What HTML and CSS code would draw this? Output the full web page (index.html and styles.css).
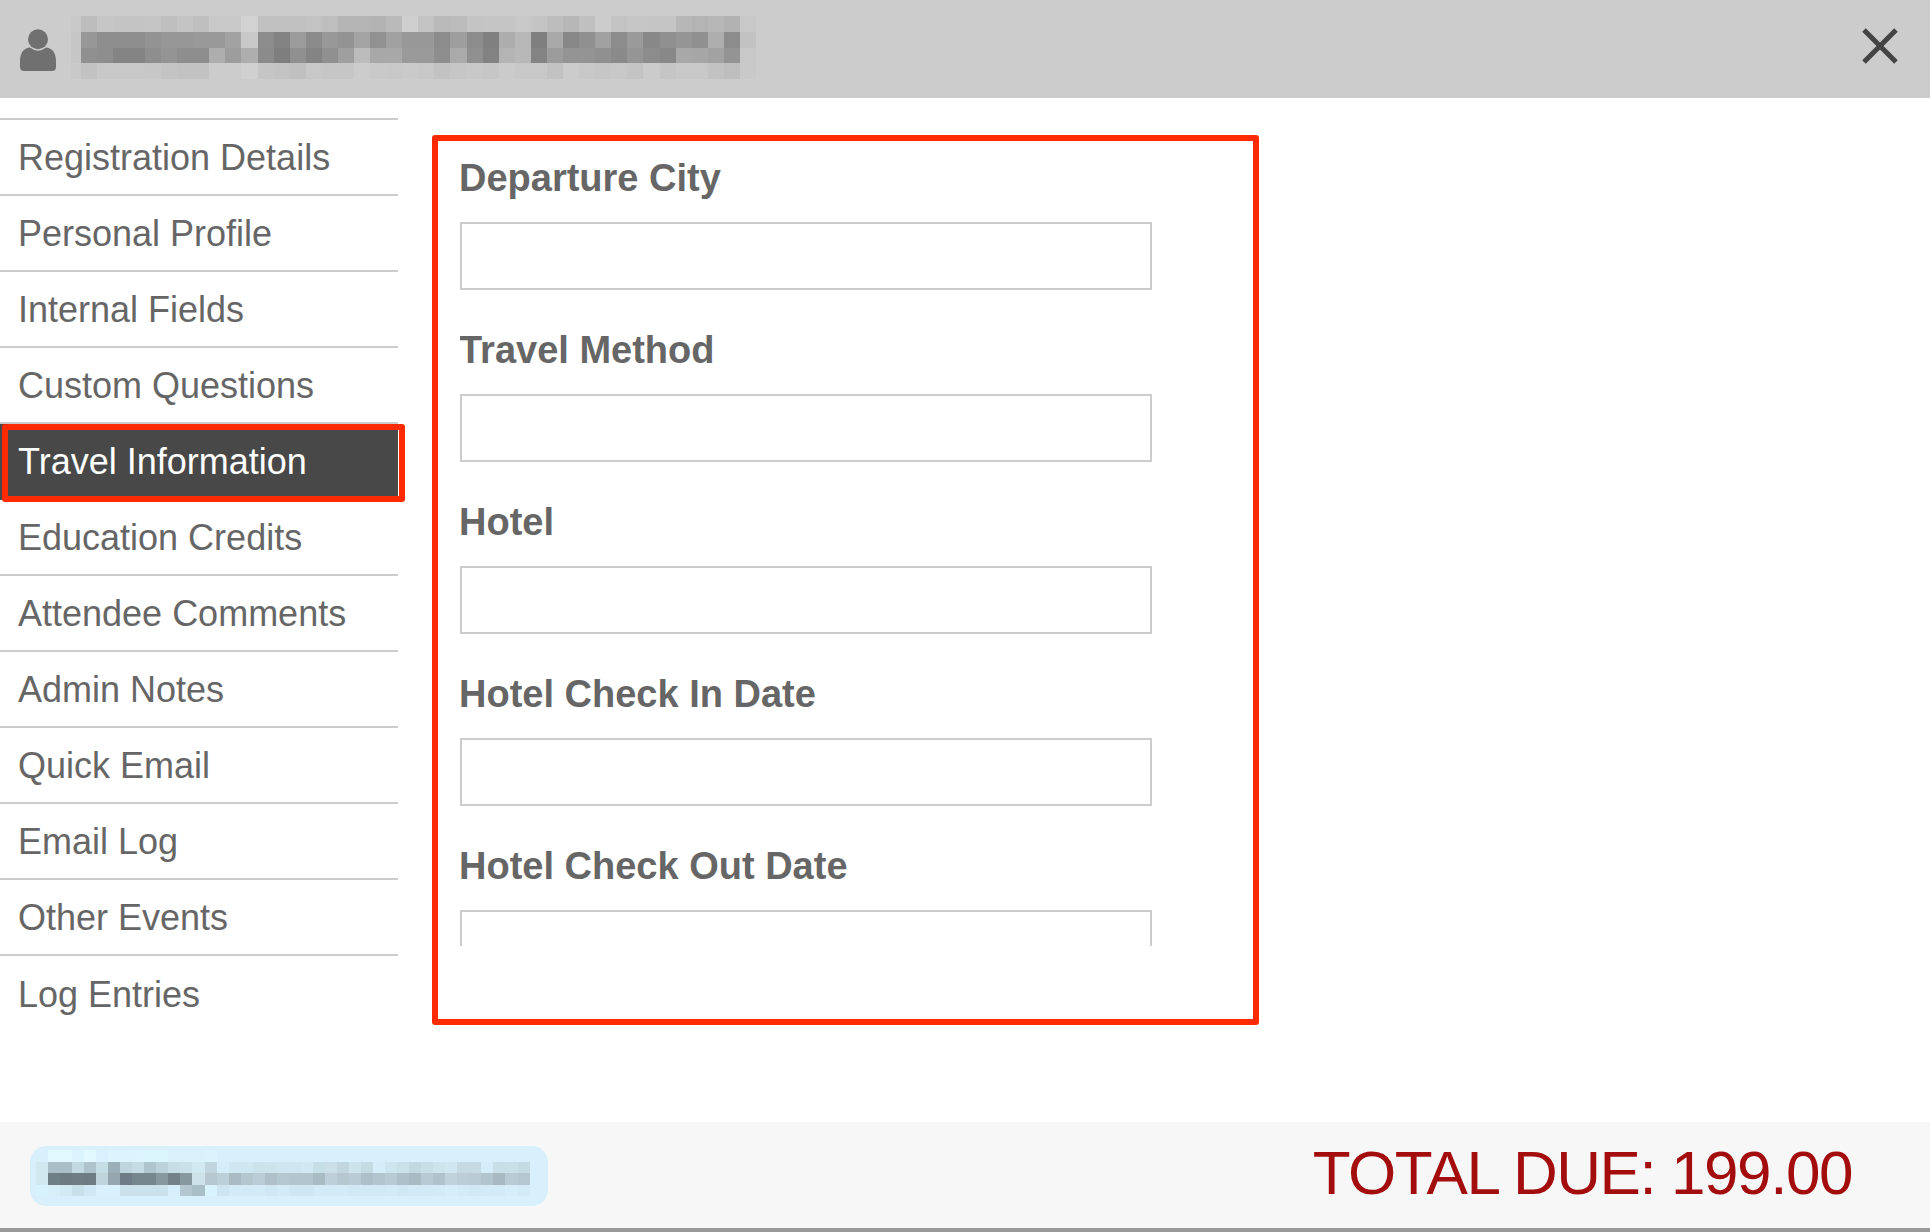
FILE: index.html
```html
<!DOCTYPE html>
<html lang="en">
<head>
<meta charset="utf-8">
<title>Travel Information</title>
<link rel="stylesheet" href="styles.css">
</head>
<body>
<div class="modal">
  <header class="top-bar">
    <svg class="avatar" width="38" height="50" viewBox="0 0 38 50" aria-hidden="true">
      <circle cx="19" cy="15.3" r="10" fill="#707070"/>
      <path d="M1 37C1 29 5 24 11 23.6A12 12 0 0 0 27 23.6C33 24 37 29 37 37V43c0 3-2 4-4 4H5c-2 0-4-1-4-4z" fill="#707070"/>
    </svg>
    <svg class="mosaic name-mosaic" viewBox="-0.6 0 42.6 4" preserveAspectRatio="none" aria-hidden="true">
      <g>
        <rect x="-0.6" fill="#c8c8c8"/><rect x="0" fill="#bdbdbd"/><rect x="1" fill="#c6c6c6"/><rect x="2" fill="#c4c4c4"/><rect x="3" fill="#c4c4c4"/><rect x="4" fill="#c5c5c5"/><rect x="5" fill="#bfbfbf"/><rect x="6" fill="#c4c4c4"/><rect x="7" fill="#bfbfbf"/><rect x="8" fill="#c8c8c8"/><rect x="9" fill="#c8c8c8"/><rect x="10" fill="#d2d2d2"/><rect x="11" fill="#c1c1c1"/><rect x="12" fill="#c1c1c1"/><rect x="13" fill="#c1c1c1"/><rect x="14" fill="#c3c3c3"/><rect x="15" fill="#bebebe"/><rect x="16" fill="#b4b4b4"/><rect x="17" fill="#b4b4b4"/><rect x="18" fill="#b3b3b3"/><rect x="19" fill="#bababa"/><rect x="20" fill="#cfcfcf"/><rect x="21" fill="#c3c3c3"/><rect x="22" fill="#bababa"/><rect x="23" fill="#bcbcbc"/><rect x="24" fill="#c4c4c4"/><rect x="25" fill="#c5c5c5"/><rect x="26" fill="#c5c5c5"/><rect x="27" fill="#c8c8c8"/><rect x="28" fill="#c4c4c4"/><rect x="29" fill="#bdbdbd"/><rect x="30" fill="#b7b7b7"/><rect x="31" fill="#c0c0c0"/><rect x="32" fill="#cccccc"/><rect x="33" fill="#c3c3c3"/><rect x="34" fill="#c6c6c6"/><rect x="35" fill="#c5c5c5"/><rect x="36" fill="#c5c5c5"/><rect x="37" fill="#b7b7b7"/><rect x="38" fill="#b4b4b4"/><rect x="39" fill="#b7b7b7"/><rect x="40" fill="#b2b2b2"/><rect x="41" fill="#c8c8c8"/>
      </g>
      <g transform="translate(0 1)">
        <rect x="-0.6" fill="#c6c6c6"/><rect x="0" fill="#979797"/><rect x="1" fill="#8e8e8e"/><rect x="2" fill="#8e8e8e"/><rect x="3" fill="#8e8e8e"/><rect x="4" fill="#939393"/><rect x="5" fill="#979797"/><rect x="6" fill="#979797"/><rect x="7" fill="#999999"/><rect x="8" fill="#999999"/><rect x="9" fill="#a2a2a2"/><rect x="10" fill="#c8c8c8"/><rect x="11" fill="#8c8c8c"/><rect x="12" fill="#828282"/><rect x="13" fill="#9b9b9b"/><rect x="14" fill="#8b8b8b"/><rect x="15" fill="#989898"/><rect x="16" fill="#939393"/><rect x="17" fill="#a4a4a4"/><rect x="18" fill="#919191"/><rect x="19" fill="#a0a0a0"/><rect x="20" fill="#989898"/><rect x="21" fill="#989898"/><rect x="22" fill="#8c8c8c"/><rect x="23" fill="#9e9e9e"/><rect x="24" fill="#8c8c8c"/><rect x="25" fill="#808080"/><rect x="26" fill="#adadad"/><rect x="27" fill="#b8b8b8"/><rect x="28" fill="#7f7f7f"/><rect x="29" fill="#a9a9a9"/><rect x="30" fill="#888888"/><rect x="31" fill="#909090"/><rect x="32" fill="#a0a0a0"/><rect x="33" fill="#8c8c8c"/><rect x="34" fill="#9a9a9a"/><rect x="35" fill="#888888"/><rect x="36" fill="#909090"/><rect x="37" fill="#959595"/><rect x="38" fill="#909090"/><rect x="39" fill="#aeaeae"/><rect x="40" fill="#8c8c8c"/><rect x="41" fill="#c2c2c2"/>
      </g>
      <g transform="translate(0 2)">
        <rect x="-0.6" fill="#c6c6c6"/><rect x="0" fill="#909090"/><rect x="1" fill="#8e8e8e"/><rect x="2" fill="#848484"/><rect x="3" fill="#848484"/><rect x="4" fill="#8e8e8e"/><rect x="5" fill="#949494"/><rect x="6" fill="#8e8e8e"/><rect x="7" fill="#8e8e8e"/><rect x="8" fill="#aeaeae"/><rect x="9" fill="#9d9d9d"/><rect x="10" fill="#aeaeae"/><rect x="11" fill="#8b8b8b"/><rect x="12" fill="#7e7e7e"/><rect x="13" fill="#909090"/><rect x="14" fill="#848484"/><rect x="15" fill="#909090"/><rect x="16" fill="#9f9f9f"/><rect x="17" fill="#bcbcbc"/><rect x="18" fill="#a8a8a8"/><rect x="19" fill="#a8a8a8"/><rect x="20" fill="#9a9a9a"/><rect x="21" fill="#9a9a9a"/><rect x="22" fill="#8e8e8e"/><rect x="23" fill="#aaaaaa"/><rect x="24" fill="#909090"/><rect x="25" fill="#828282"/><rect x="26" fill="#b4b4b4"/><rect x="27" fill="#b8b8b8"/><rect x="28" fill="#848484"/><rect x="29" fill="#9c9c9c"/><rect x="30" fill="#949494"/><rect x="31" fill="#949494"/><rect x="32" fill="#909090"/><rect x="33" fill="#8a8a8a"/><rect x="34" fill="#959595"/><rect x="35" fill="#8c8c8c"/><rect x="36" fill="#888888"/><rect x="37" fill="#a8a8a8"/><rect x="38" fill="#a6a6a6"/><rect x="39" fill="#a2a2a2"/><rect x="40" fill="#949494"/><rect x="41" fill="#c8c8c8"/>
      </g>
      <g transform="translate(0 3)">
        <rect x="-0.6" fill="#c9c9c9"/><rect x="0" fill="#c2c2c2"/><rect x="1" fill="#c8c8c8"/><rect x="2" fill="#c8c8c8"/><rect x="3" fill="#c8c8c8"/><rect x="4" fill="#c7c7c7"/><rect x="5" fill="#c4c4c4"/><rect x="6" fill="#c2c2c2"/><rect x="7" fill="#c2c2c2"/><rect x="8" fill="#cccccc"/><rect x="9" fill="#cccccc"/><rect x="10" fill="#d0d0d0"/><rect x="11" fill="#c5c5c5"/><rect x="12" fill="#c3c3c3"/><rect x="13" fill="#c0c0c0"/><rect x="14" fill="#c8c8c8"/><rect x="15" fill="#c6c6c6"/><rect x="16" fill="#c6c6c6"/><rect x="17" fill="#cccccc"/><rect x="18" fill="#c9c9c9"/><rect x="19" fill="#c8c8c8"/><rect x="20" fill="#cacaca"/><rect x="21" fill="#c8c8c8"/><rect x="22" fill="#c2c2c2"/><rect x="23" fill="#c6c6c6"/><rect x="24" fill="#c8c8c8"/><rect x="25" fill="#c6c6c6"/><rect x="26" fill="#cbcbcb"/><rect x="27" fill="#c8c8c8"/><rect x="28" fill="#c8c8c8"/><rect x="29" fill="#c2c2c2"/><rect x="30" fill="#cccccc"/><rect x="31" fill="#c8c8c8"/><rect x="32" fill="#c6c6c6"/><rect x="33" fill="#c8c8c8"/><rect x="34" fill="#c4c4c4"/><rect x="35" fill="#cbcbcb"/><rect x="36" fill="#c5c5c5"/><rect x="37" fill="#c8c8c8"/><rect x="38" fill="#c8c8c8"/><rect x="39" fill="#c2c2c2"/><rect x="40" fill="#bebebe"/><rect x="41" fill="#c9c9c9"/>
      </g>
    </svg>
    <button class="close-btn" type="button" aria-label="Close">
      <svg width="38" height="38" viewBox="0 0 38 38" aria-hidden="true"><path d="M3 3l32 32M35 3L3 35" stroke="#444" stroke-width="5" fill="none"/></svg>
    </button>
  </header>

  <div class="content">
    <nav class="side-nav">
      <a class="nav-item">Registration Details</a>
      <a class="nav-item">Personal Profile</a>
      <a class="nav-item">Internal Fields</a>
      <a class="nav-item">Custom Questions</a>
      <a class="nav-item is-active">Travel Information</a>
      <a class="nav-item">Education Credits</a>
      <a class="nav-item">Attendee Comments</a>
      <a class="nav-item">Admin Notes</a>
      <a class="nav-item">Quick Email</a>
      <a class="nav-item">Email Log</a>
      <a class="nav-item">Other Events</a>
      <a class="nav-item">Log Entries</a>
    </nav>

    <section class="form-panel">
      <div class="form-scroll">
        <div class="field"><label class="field-label">Departure City</label><input class="field-input" type="text"></div>
        <div class="field"><label class="field-label">Travel Method</label><input class="field-input" type="text"></div>
        <div class="field"><label class="field-label">Hotel</label><input class="field-input" type="text"></div>
        <div class="field"><label class="field-label">Hotel Check In Date</label><input class="field-input" type="text"></div>
        <div class="field"><label class="field-label">Hotel Check Out Date</label><input class="field-input" type="text"></div>
      </div>
    </section>
  </div>

  <footer class="bottom-bar">
    <div class="notice">
      <svg class="mosaic notice-mosaic" viewBox="-1 0 41.7 4" preserveAspectRatio="none" aria-hidden="true">
        <g>
          <rect x="0" fill="#e2f9ff"/><rect x="1" fill="#e2f9ff"/><rect x="2" fill="#dcf4fd"/><rect x="3" fill="#e2f9ff"/><rect x="4" fill="#d8f1fc"/><rect x="5" fill="#dcf4fd"/><rect x="6" fill="#dcf4fd"/><rect x="7" fill="#dcf5fe"/><rect x="8" fill="#dcf6fe"/><rect x="9" fill="#dcf6fe"/><rect x="10" fill="#d8f1fb"/><rect x="11" fill="#d8f1fb"/><rect x="12" fill="#d8f1fb"/><rect x="13" fill="#daf3fd"/>
        </g>
        <g transform="translate(0 1)">
          <rect x="-1" fill="#d0e8f0"/><rect x="0" fill="#a9bec7"/><rect x="1" fill="#a9bec7"/><rect x="2" fill="#c3d9e1"/><rect x="3" fill="#aec3cc"/><rect x="4" fill="#c5dde5"/><rect x="5" fill="#9bafb8"/><rect x="6" fill="#bed5dd"/><rect x="7" fill="#c5dce4"/><rect x="8" fill="#aec5ce"/><rect x="9" fill="#bcd2da"/><rect x="10" fill="#c8dee6"/><rect x="11" fill="#cbe1e9"/><rect x="12" fill="#d2e9f2"/><rect x="13" fill="#c0d5dd"/><rect x="14" fill="#d4edf8"/><rect x="15" fill="#cfe7f1"/><rect x="16" fill="#cfe7f1"/><rect x="17" fill="#cce3ec"/><rect x="18" fill="#cde4ed"/><rect x="19" fill="#cfe6f0"/><rect x="20" fill="#cfe6f0"/><rect x="21" fill="#d2e9f3"/><rect x="22" fill="#c6dee6"/><rect x="23" fill="#cadfe8"/><rect x="24" fill="#c1d6df"/><rect x="25" fill="#cde3ec"/><rect x="26" fill="#c5dbe3"/><rect x="27" fill="#d6eefa"/><rect x="28" fill="#cde5ee"/><rect x="29" fill="#cbe1ea"/><rect x="30" fill="#c2d8e1"/><rect x="31" fill="#c9dfe8"/><rect x="32" fill="#cde4ed"/><rect x="33" fill="#d0e7f1"/><rect x="34" fill="#c5dae3"/><rect x="35" fill="#c5dae3"/><rect x="36" fill="#d5edf8"/><rect x="37" fill="#c9dfe8"/><rect x="38" fill="#cae0e9"/><rect x="39" fill="#c5dbe4"/>
        </g>
        <g transform="translate(0 2)">
          <rect x="-1" fill="#d0e8f0"/><rect x="0" fill="#6f7f86"/><rect x="1" fill="#6c7b82"/><rect x="2" fill="#6e7d84"/><rect x="3" fill="#6d7c83"/><rect x="4" fill="#c0d4db"/><rect x="5" fill="#95a6ae"/><rect x="6" fill="#6e7d85"/><rect x="7" fill="#76868d"/><rect x="8" fill="#76868d"/><rect x="9" fill="#87989f"/><rect x="10" fill="#738289"/><rect x="11" fill="#87989f"/><rect x="12" fill="#cde2e9"/><rect x="13" fill="#b5c8d0"/><rect x="14" fill="#bbd0d8"/><rect x="15" fill="#aabbc4"/><rect x="16" fill="#b4c6ce"/><rect x="17" fill="#bacdd6"/><rect x="18" fill="#afc0c9"/><rect x="19" fill="#b5c7cf"/><rect x="20" fill="#b3c5cd"/><rect x="21" fill="#b3c5cd"/><rect x="22" fill="#a9bbc3"/><rect x="23" fill="#bdd0d9"/><rect x="24" fill="#b5c8d0"/><rect x="25" fill="#b9ccd5"/><rect x="26" fill="#adbfc8"/><rect x="27" fill="#b3c5ce"/><rect x="28" fill="#b8cad3"/><rect x="29" fill="#aec0c9"/><rect x="30" fill="#a8bac2"/><rect x="31" fill="#b8cad3"/><rect x="32" fill="#b0c2cb"/><rect x="33" fill="#c0d3dc"/><rect x="34" fill="#bbced7"/><rect x="35" fill="#b9ccd5"/><rect x="36" fill="#b2c4cc"/><rect x="37" fill="#a8b9c2"/><rect x="38" fill="#b9cbd4"/><rect x="39" fill="#b5c7d0"/>
        </g>
        <g transform="translate(0 3)">
          <rect x="-1" fill="#d8f2fd"/><rect x="0" fill="#d6eff9"/><rect x="1" fill="#d2eaf4"/><rect x="2" fill="#c8e0ea"/><rect x="3" fill="#d0e8f3"/><rect x="4" fill="#d8f1fc"/><rect x="5" fill="#d8f1fc"/><rect x="6" fill="#cbe2ec"/><rect x="7" fill="#cbe2ec"/><rect x="8" fill="#cbe2ec"/><rect x="9" fill="#cbe2ec"/><rect x="10" fill="#d6effa"/><rect x="11" fill="#b2c7d0"/><rect x="12" fill="#a9bfc8"/><rect x="13" fill="#d9f3fe"/><rect x="14" fill="#cde5f0"/><rect x="15" fill="#d3ebf6"/><rect x="16" fill="#d3ebf6"/><rect x="17" fill="#d3ebf6"/><rect x="18" fill="#d0e8f3"/><rect x="19" fill="#d3ebf6"/><rect x="20" fill="#cfe7f2"/><rect x="21" fill="#cfe7f2"/><rect x="22" fill="#d3ebf6"/><rect x="23" fill="#d3ebf6"/><rect x="24" fill="#d3ebf6"/><rect x="25" fill="#d0e9f4"/><rect x="26" fill="#d1e9f4"/><rect x="27" fill="#d1e9f4"/><rect x="28" fill="#d3ebf6"/><rect x="29" fill="#d0e8f3"/><rect x="30" fill="#d2eaf5"/><rect x="31" fill="#d2eaf5"/><rect x="32" fill="#d3ebf6"/><rect x="33" fill="#d6eef9"/><rect x="34" fill="#d3ebf6"/><rect x="35" fill="#d1e9f4"/><rect x="36" fill="#d3ebf6"/><rect x="37" fill="#d3ebf6"/><rect x="38" fill="#d6eef9"/><rect x="39" fill="#d3ebf6"/>
        </g>
      </svg>
    </div>
    <div class="total-due">TOTAL DUE: 199.00</div>
  </footer>
</div>
</body>
</html>
```

FILE: styles.css
```css
*,
*::before,
*::after {
  box-sizing: border-box;
}

html,
body {
  margin: 0;
  padding: 0;
  background: #fff;
}

body {
  font-family: "Liberation Sans", Arial, sans-serif;
  color: #666;
}

.modal {
  display: flex;
  flex-direction: column;
  width: 1930px;
  height: 1232px;
  overflow: hidden;
}

.top-bar {
  flex: none;
  display: flex;
  align-items: center;
  height: 98px;
  padding: 0 31px 2px 19px;
  background: #ccc;
}

.avatar {
  flex: none;
  margin-top: 2px;
}

.mosaic {
  display: block;
  shape-rendering: crispEdges;
}

.mosaic rect {
  width: 1.04px;
  height: 1.01px;
}

.name-mosaic {
  flex: none;
  width: 685px;
  height: 63px;
  margin: 0 0 1px 14px;
  filter: blur(0.6px);
}

.close-btn {
  display: flex;
  margin: 0 0 4px auto;
  padding: 0;
  border: 0;
  background: none;
}

.content {
  flex: 1;
  display: flex;
  align-items: flex-start;
  min-height: 0;
}

.side-nav {
  flex: none;
  width: 398px;
  margin-top: 20px;
  border-top: 2px solid #ccc;
}

.nav-item {
  position: relative;
  display: flex;
  align-items: center;
  height: 76px;
  padding: 2px 0 0 18px;
  border-bottom: 2px solid #ccc;
  font-size: 36px;
  color: #666;
}

.nav-item:last-child {
  border-bottom: 0;
}

.nav-item.is-active {
  background: #484848;
  color: #fff;
  border-bottom-color: #484848;
}

.nav-item.is-active::after {
  content: "";
  position: absolute;
  left: 2px;
  top: 0;
  width: 403px;
  height: 78px;
  border: 6px solid #ff2a00;
  border-radius: 3px;
}

.form-panel {
  flex: none;
  width: 827px;
  height: 890px;
  margin: 37px 0 0 34px;
  padding-left: 22px;
  border: 6px solid #ff2a00;
  border-radius: 3px;
}

.form-scroll {
  height: 805px;
  overflow: hidden;
}

.field {
  height: 172px;
}

.field-label {
  display: block;
  height: 81px;
  margin-left: -1px;
  padding-top: 15px;
  font-size: 38px;
  line-height: 44px;
  font-weight: 700;
  color: #666;
}

.field-input {
  display: block;
  width: 692px;
  height: 68px;
  padding: 0 10px;
  border: 2px solid #ccc;
  border-radius: 0;
  background: #fff;
}

.bottom-bar {
  flex: none;
  display: flex;
  align-items: center;
  justify-content: space-between;
  height: 110px;
  padding: 0 78px 0 30px;
  background: #f7f7f7;
  border-bottom: 4px solid #999;
}

.notice {
  flex: none;
  width: 518px;
  height: 60px;
  margin-top: 2px;
  padding: 4px 10px 10px 6px;
  border-radius: 16px;
  background: #d7f0fb;
}

.notice-mosaic {
  width: 502px;
  height: 46px;
  filter: blur(0.5px);
}

.total-due {
  margin-bottom: 4px;
  font-size: 62px;
  line-height: 72px;
  letter-spacing: -1.45px;
  color: #a30d0d;
}
```
